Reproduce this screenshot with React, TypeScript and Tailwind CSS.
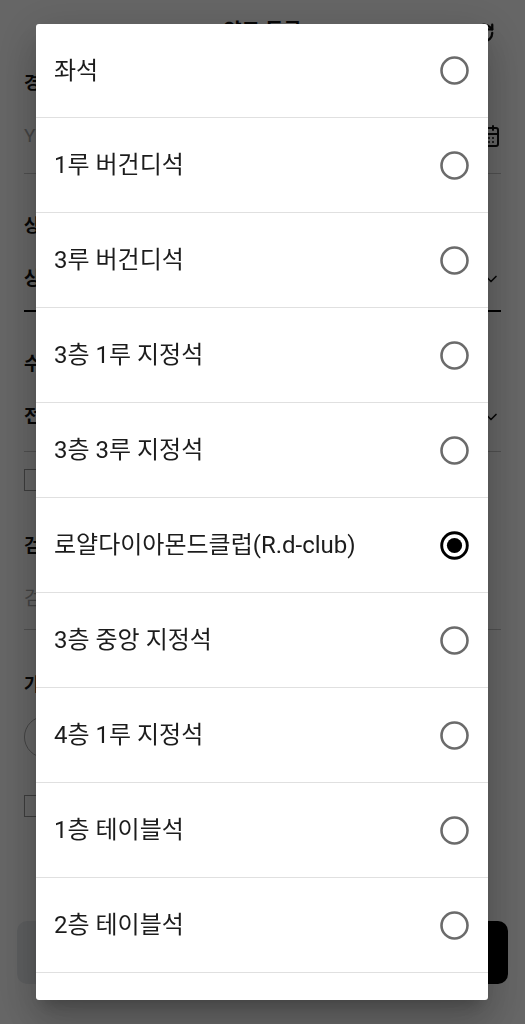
import { CalendarDays, ChevronDown, RotateCw } from "lucide-react";

const seats = [
  "좌석",
  "1루 버건디석",
  "3루 버건디석",
  "3층 1루 지정석",
  "3층 3루 지정석",
  "로얄다이아몬드클럽(R.d-club)",
  "3층 중앙 지정석",
  "4층 1루 지정석",
  "1층 테이블석",
  "2층 테이블석",
];

const SELECTED = 5;

function Radio({ checked }: { checked: boolean }) {
  return (
    <svg width="29" height="29" viewBox="0 0 29 29" className="shrink-0">
      {checked ? (
        <>
          <circle cx="14.5" cy="14.5" r="12.8" fill="none" stroke="#000" strokeWidth="2.9" />
          <circle cx="14.5" cy="14.5" r="7.6" fill="#000" />
        </>
      ) : (
        <circle cx="14.5" cy="14.5" r="13" fill="none" stroke="#6b6b6b" strokeWidth="2.6" />
      )}
    </svg>
  );
}

/* the ticket form that sits under the dim overlay */
function BackgroundForm() {
  return (
    <div className="flex flex-col text-[#111]">
      <header className="relative flex h-[56px] items-center justify-center">
        <span className="pt-[6px] text-[20px] font-bold">양도 등록</span>
        <RotateCw className="absolute right-[30px] top-[22px] h-[22px] w-[22px]" strokeWidth={2.5} />
      </header>

      <div className="flex flex-col px-[24px]">
        <label className="mt-[13px] text-[18px] font-bold">경기일자</label>
        <div className="mt-[26px] flex items-center justify-between border-b border-[#c8c8c8] pb-[22px]">
          <span className="text-[19px] text-[#aaa]">YYYY-MM-DD</span>
          <CalendarDays className="h-[24px] w-[24px]" />
        </div>

        <label className="mt-[38px] text-[18px] font-bold">상품종류</label>
        <div className="mt-[26px] flex items-center justify-between border-b-2 border-black pb-[17px]">
          <span className="text-[19px] font-bold">상품 선택</span>
          <ChevronDown className="h-[20px] w-[20px]" />
        </div>

        <label className="mt-[38px] text-[18px] font-bold">수량</label>
        <div className="mt-[26px] flex items-center justify-between border-b border-[#c8c8c8] pb-[19px]">
          <span className="text-[19px] font-bold">전체</span>
          <ChevronDown className="h-[20px] w-[20px]" />
        </div>

        <div className="mt-[16px] flex items-center gap-2">
          <span className="h-[22px] w-[13px] border border-[#999]" />
          <span className="text-[16px]">연석 여부</span>
        </div>

        <label className="mt-[40px] text-[18px] font-bold">검색어</label>
        <div className="mt-[26px] border-b border-[#c8c8c8] pb-[16px]">
          <span className="text-[19px] text-[#aaa]">검색어를 입력하세요</span>
        </div>

        <label className="mt-[41px] text-[18px] font-bold">가격</label>
        <div className="mt-[18px] h-[42px] w-[160px] rounded-full border border-[#aaa]" />

        <div className="mt-[36px] flex items-center gap-2">
          <span className="h-[22px] w-[13px] border border-[#999]" />
          <span className="text-[16px]">약관 동의</span>
        </div>
      </div>

      <div className="mt-[103px] flex gap-[10px] px-[17px]">
        <button className="h-[63px] flex-1 rounded-[10px] bg-[#e8ebee] text-[18px] font-bold">초기화</button>
        <button className="h-[63px] flex-1 rounded-[10px] bg-black text-[18px] font-bold text-white">검색</button>
      </div>
    </div>
  );
}

export default function App() {
  return (
    <div
      className="relative h-[1024px] overflow-hidden bg-white"
      style={{ fontFamily: 'Roboto, "Noto Sans CJK KR", sans-serif' }}
    >
      <BackgroundForm />

      {/* dim + dialog */}
      <div className="fixed inset-0 flex items-start bg-black/60 pl-[36px] pt-[24px]">
        <div className="flex h-[976px] w-[452px] flex-col overflow-hidden rounded-[3px] bg-white shadow-[0_11px_15px_-7px_rgba(0,0,0,0.2),0_24px_38px_3px_rgba(0,0,0,0.14),0_9px_46px_8px_rgba(0,0,0,0.12)]">
          {seats.map((s, i) => (
            <div
              key={s}
              className={
                i === 0
                  ? "flex h-[94px] shrink-0 items-center justify-between border-b border-[#e0e0e0] pl-[18px] pr-[19px]"
                  : "flex h-[95px] shrink-0 items-center justify-between border-b border-[#e0e0e0] pl-[18px] pr-[19px]"
              }
            >
              <span className="text-[24px] leading-none text-[#1c1c1c]">{s}</span>
              <Radio checked={i === SELECTED} />
            </div>
          ))}
        </div>
      </div>
    </div>
  );
}
